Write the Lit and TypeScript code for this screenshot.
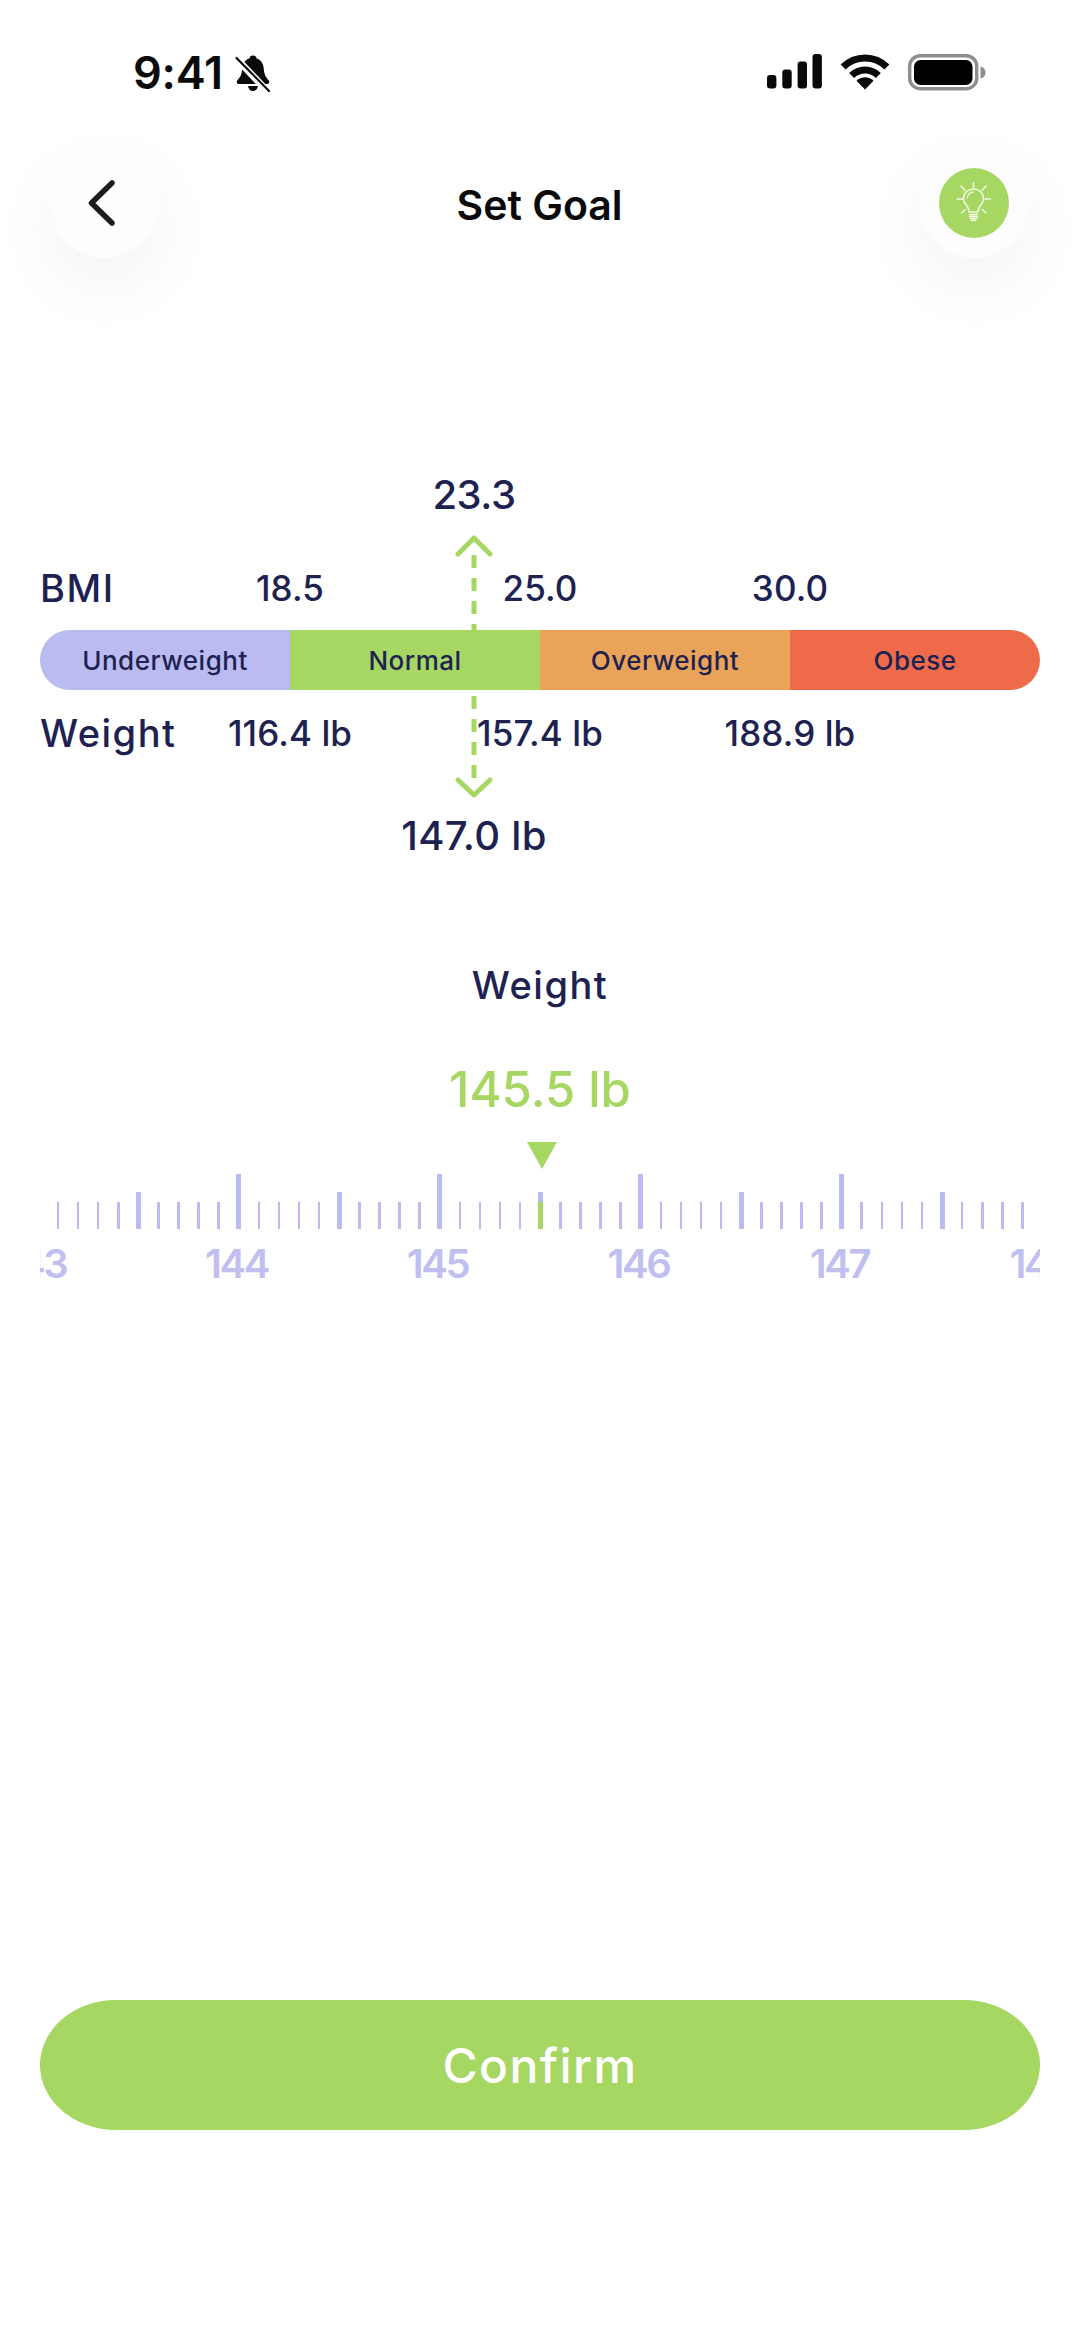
import { LitElement, html, css, svg } from "lit";
import { customElement } from "lit/decorators.js";

const thresholds = [
  { bmi: "18.5", lb: "116.4 lb" },
  { bmi: "25.0", lb: "157.4 lb" },
  { bmi: "30.0", lb: "188.9 lb" },
];
const zones = [
  { name: "Underweight", cls: "under" },
  { name: "Normal", cls: "normal" },
  { name: "Overweight", cls: "over" },
  { name: "Obese", cls: "obese" },
];
const ticks = Array.from({ length: 49 }, (_, k) => k);
const scale = ["143", "144", "145", "146", "147", "148"];

@customElement("app-root")
export class AppRoot extends LitElement {
  static styles = css`
    :host {
      display: block;
      width: 1080px;
      height: 2341px;
      background: #fff;
      overflow: hidden;
      font-family: "Inter", "Liberation Sans", sans-serif;
      color: #1e2250;
    }
    .page { display: flex; flex-direction: column; height: 2341px; }

    .status { display: flex; align-items: flex-start; height: 38px; margin-top: 54px; padding: 0 94px 0 133px; flex: none; }
    .time { font-size: 45px; line-height: 38px; font-weight: 600; color: #0a0a0a; letter-spacing: -0.2px; }
    .bell { margin: 1px 0 0 12px; }
    .status-right { margin-left: auto; display: flex; gap: 18px; align-items: flex-start; }
    .status svg { display: block; }

    .nav { display: flex; justify-content: space-between; align-items: center; margin-top: 56px; padding: 0 51px 0 50px; flex: none; }
    .round { width: 110px; height: 110px; border-radius: 50%; background: #fdfdfd; box-shadow: 0 26px 70px rgba(0, 0, 0, 0.05); display: flex; align-items: center; justify-content: center; }
    .round svg { display: block; }
    .title { font-size: 41px; line-height: 50px; font-weight: 600; color: #0a0a0a; letter-spacing: 0; margin-top: 3px; }
    .tip { width: 70px; height: 70px; border-radius: 50%; background: #a5d762; }

    .chart { position: relative; margin-top: 212px; padding: 93px 40px 0; height: 400px; box-sizing: border-box; flex: none; }
    .row { display: grid; grid-template-columns: 125px repeat(3, 250px) 125px; height: 50px; align-items: center; }
    .row-label { font-size: 38px; font-weight: 500; letter-spacing: 1.5px; white-space: nowrap; line-height: 50px; }
    .row-value { text-align: center; font-size: 35px; font-weight: 500; letter-spacing: 0.1px; line-height: 50px; }
    .bar { position: relative; z-index: 1; display: grid; grid-template-columns: repeat(4, 250px); height: 60px; margin: 17px 0 18px; border-radius: 30px; overflow: hidden; }
    .zone { display: flex; align-items: center; justify-content: center; font-size: 26px; font-weight: 500; letter-spacing: 0.5px; }
    .under { background: #babbf1; }
    .normal { background: #a5d762; }
    .over { background: #eaa45a; }
    .obese { background: #ee6a4a; }

    .marker { position: absolute; top: 0; left: 374px; width: 200px; display: flex; flex-direction: column; align-items: center; }
    .marker svg { display: block; flex: none; }
    .marker-value { font-size: 40px; font-weight: 500; line-height: 50px; white-space: nowrap; letter-spacing: 0.3px; }
    .marker-value.bmi { letter-spacing: -0.5px; }
    .up { margin-top: 15px; }
    .down { margin-top: 66px; margin-bottom: 12px; }

    .picker { display: flex; flex-direction: column; align-items: center; margin-top: 90px; flex: none; }
    .picker-title { font-size: 38px; line-height: 50px; font-weight: 500; letter-spacing: 1.5px; }
    .picker-value { font-size: 49px; line-height: 60px; font-weight: 500; color: #a5d762; margin-top: 50px; }
    .pointer { display: block; margin: 22px 0 0 4px; }

    .ruler { width: 1000px; overflow: hidden; margin-top: 5px; }
    .ticks { display: flex; align-items: flex-end; height: 55px; padding-left: 7.95px; }
    .cell { flex: 0 0 20.1px; display: flex; justify-content: center; align-items: flex-end; }
    .tick { width: 2.5px; height: 27px; background: #babbf1; }
    .tick.mid { width: 5px; height: 37px; }
    .tick.big { width: 5px; height: 55px; }
    .tick.active { background: linear-gradient(#babbf1 10px, #a5d762 10px); }
    .labels { display: flex; margin: 10px 0 0 -105px; }
    .labels span { flex: 0 0 201px; text-align: center; font-size: 40px; line-height: 50px; font-weight: 600; letter-spacing: -2.4px; color: #c1bef0; }

    .confirm { margin: auto 40px 211px; height: 130px; border-radius: 76px / 65px; background: #a5d762; border: none; color: #fff; font-family: inherit; font-size: 48px; font-weight: 500; letter-spacing: 1.4px; flex: none; }
  `;

  private bell() {
    return html`<svg class="bell" width="36" height="37" viewBox="0 0 36 37">
      <path fill="#0a0a0a" d="M18 0.5c-2 0-3.4 1.3-3.6 3C9.8 4.8 7.6 8.8 7.2 14c-.4 5-1.6 7.7-4.6 11-1.6 1.8-.8 4 1.600 4h27.600c2.400 0 3.200-2.200 1.600-4-3-3.300-4.200-6-4.600-11-.4-5.200-2.600-9.200-7.200-10.500-.2-1.700-1.600-3-3.600-3z"/>
      <path fill="#0a0a0a" d="M13 31h10c-.4 3-2.400 5-5 5s-4.600-2-5-5z"/>
      <path stroke="#fff" stroke-width="7" d="M0 2 L34 38"/>
      <path stroke="#0a0a0a" stroke-width="2.200" stroke-linecap="round" d="M1.500 3 L34 36"/>
    </svg>`;
  }

  private signal() {
    const bars = [[0, 21, 13.5], [15.3, 15.5, 19], [30.6, 7.5, 27], [45.5, 0, 34.5]];
    return html`<svg width="55" height="35" viewBox="0 0 55 35">
      ${bars.map(([x, y, h]) => svg`<rect x=${x} y=${y} width="9.400" height=${h} rx="3" fill="#0a0a0a"/>`)}
    </svg>`;
  }

  private wifi() {
    return html`<svg width="50" height="36" viewBox="0 0 50 36" fill="none">
      <path stroke="#0a0a0a" stroke-width="7" d="M3.100 13.100A31 31 0 0 1 46.900 13.100"/>
      <path stroke="#0a0a0a" stroke-width="7" d="M11.600 21.600A19 19 0 0 1 38.400 21.600"/>
      <path fill="#0a0a0a" d="M25 35.500L16.500 26.800A12 12 0 0 1 33.500 26.800Z"/>
    </svg>`;
  }

  private battery() {
    return html`<svg width="78" height="37" viewBox="0 0 78 37">
      <rect x="1.700" y="1.700" width="67" height="33" rx="10.500" fill="none" stroke="#8e8e8e" stroke-width="3.400"/>
      <rect x="6" y="6" width="58.500" height="25" rx="6.500" fill="#000"/>
      <path d="M72.500 12.500c3.500 .8 5 3 5 6s-1.500 5.200-5 6z" fill="#8e8e8e"/>
    </svg>`;
  }

  private bulb() {
    return html`<svg class="tip" viewBox="0 0 70 70" fill="none" stroke="#f3f9e6" stroke-width="1.500" stroke-linecap="round">
      <path d="M30 44c0-4-1.500-5.500-3.500-8-1.400-1.800-2-3.600-2-5.500 0-5.500 4.700-9.500 10-9.500s10 4 10 9.500c0 1.900-.6 3.700-2 5.500-2 2.500-3.500 4-3.500 8z"/>
      <path d="M28.500 29.500c.3-3 2.800-5.300 5.600-5.500"/>
      <path d="M30.500 46.500h8M30.500 48.500h8M31 50.500h7M32.500 52.500h4"/>
      <path d="M34.500 14.500v5M18 31h5.500M46 31h5.500M22 18l4 4.500M47 18l-4 4.500M22.500 45l3.500-3.500M47 45l-3.800-3.500"/>
    </svg>`;
  }

  private tick(k: number) {
    const big = k % 10 === 9;
    const mid = k % 10 === 4;
    const cls = ["tick", big ? "big" : "", mid ? "mid" : "", k === 24 ? "active" : ""].join(" ");
    return html`<div class="cell"><div class=${cls}></div></div>`;
  }

  render() {
    return html`<div class="page">
      <div class="status">
        <span class="time">9:41</span>
        ${this.bell()}
        <div class="status-right">${this.signal()}${this.wifi()}${this.battery()}</div>
      </div>

      <div class="nav">
        <div class="round">
          <svg width="40" height="56" viewBox="0 0 40 56" fill="none" stroke="#1c1c1c" stroke-width="5.500" stroke-linecap="round" stroke-linejoin="round">
            <path d="M27 8L6.500 28L27 48"/>
          </svg>
        </div>
        <div class="title">Set Goal</div>
        <div class="round">${this.bulb()}</div>
      </div>

      <div class="chart">
        <div class="marker">
          <div class="marker-value bmi">23.3</div>
          <svg class="up" width="44" height="95" viewBox="0 0 44 95" fill="none" stroke="#a5d762" stroke-width="5">
            <path stroke-linecap="round" stroke-linejoin="round" d="M6 19L22 3L38 19"/>
            <path stroke-dasharray="13 10" d="M22 20V95"/>
          </svg>
          <svg class="down" width="44" height="103" viewBox="0 0 44 103" fill="none" stroke="#a5d762" stroke-width="5">
            <path stroke-dasharray="13 10" d="M22 0V85"/>
            <path stroke-linecap="round" stroke-linejoin="round" d="M6 84L22 99L38 84"/>
          </svg>
          <div class="marker-value">147.0 lb</div>
        </div>
        <div class="row">
          <span class="row-label">BMI</span>
          ${thresholds.map((t) => html`<span class="row-value">${t.bmi}</span>`)}
        </div>
        <div class="bar">
          ${zones.map((z) => html`<div class="zone ${z.cls}">${z.name}</div>`)}
        </div>
        <div class="row">
          <span class="row-label">Weight</span>
          ${thresholds.map((t) => html`<span class="row-value">${t.lb}</span>`)}
        </div>
      </div>

      <div class="picker">
        <div class="picker-title">Weight</div>
        <div class="picker-value">145.5 lb</div>
        <svg class="pointer" width="30" height="27" viewBox="0 0 30 27"><path d="M0 0H30L15 27Z" fill="#a5d762"/></svg>
        <div class="ruler">
          <div class="ticks">${ticks.map((k) => this.tick(k))}</div>
          <div class="labels">${scale.map((s) => html`<span>${s}</span>`)}</div>
        </div>
      </div>

      <button class="confirm">Confirm</button>
    </div>`;
  }
}
